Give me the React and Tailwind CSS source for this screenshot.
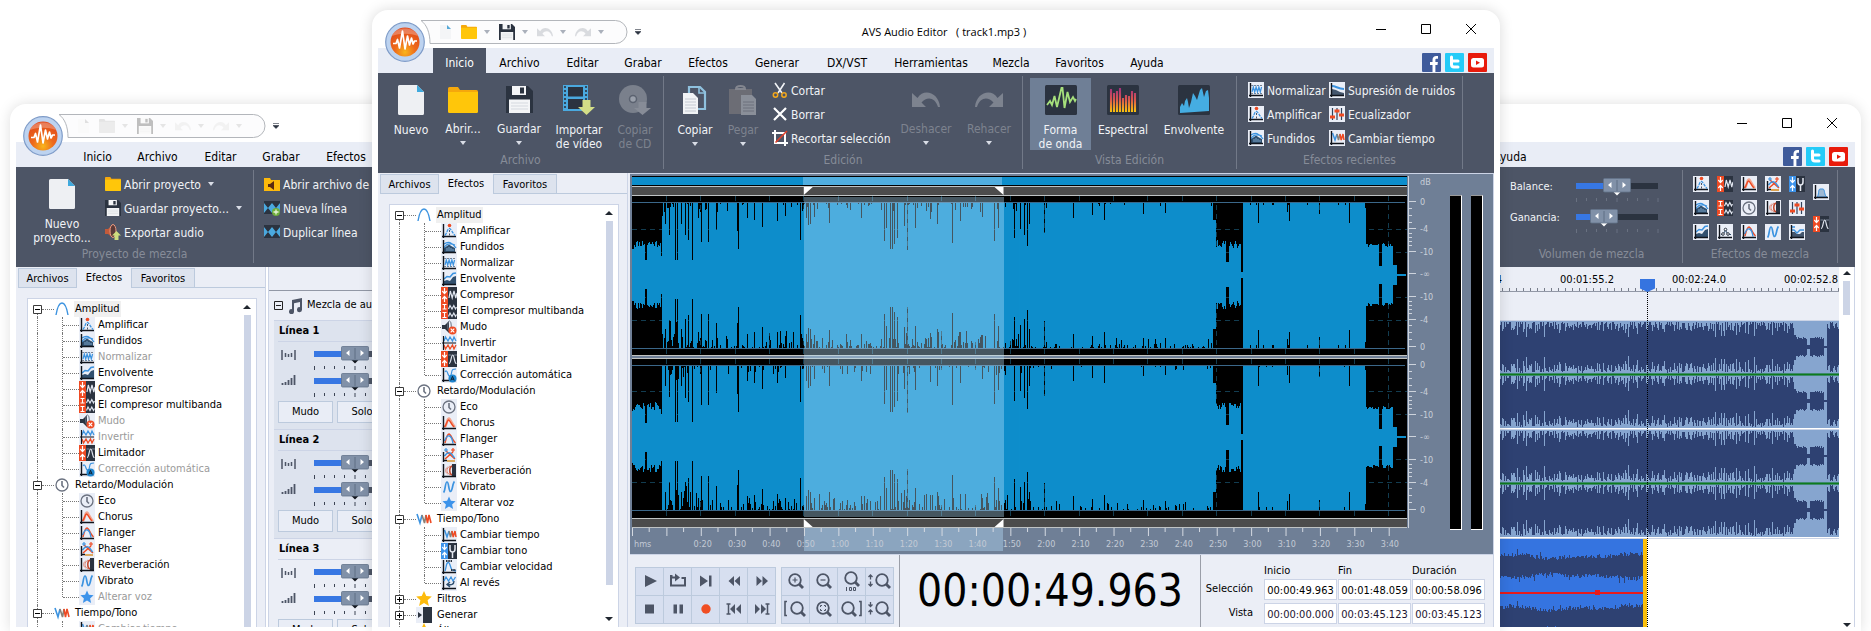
import React from 'react'

/* ---------- helpers ---------- */

function noise(seed) {
  let s = seed
  return () => {
    s = (s * 1664525 + 1013904223) % 4294967296
    return s / 4294967296
  }
}

const SPIKES = {
  33: 0.3, 37: 0.45, 43: 0.79, 45: 0.79, 49: 0.3, 53: 0.46, 56: 0.52, 60: 0.79, 69: 0.55, 76: 0.55, 84: 0.39, 105: 0.4,
  106: 0.65, 115: 0.22, 122: 0.25, 130: 0.34, 145: 0.26, 153: 0.19, 168: 0.52, 174: 0.22, 176: 0.32, 178: 0.3, 182: 0.2,
  197: 0.29, 229: 0.22, 252: 0.54, 254: 0.35, 258: 0.65, 260: 0.65, 262: 0.58, 265: 0.5, 272: 0.33, 275: 0.66, 283: 0.35,
  298: 0.24, 305: 0.3, 320: 0.56, 328: 0.26, 350: 0.2, 362: 0.54, 366: 0.35, 382: 0.5, 389: 0.37, 393: 0.46, 396: 0.61,
  398: 0.3, 413: 0.43, 442: 0.22, 461: 0.18, 473: 0.25, 512: 0.16, 534: 0.15, 627: 0.29, 656: 0.14, 658: 0.26, 688: 0.17, 718: 0.29,
}

function laneAmp(x, r, deep = 1) {
  if (x < 30) {
    if (x > 12 && x < 15) return 0.2
    return 0.38 + r() * 0.1 - (x < 2 ? 0.05 : 0) - (x > 28 ? 0.12 : 0)
  }
  if (x < 582) {
    const e = x < 75 ? 0.5 : x < 172 ? 0.3 : x < 400 ? 0.32 : 0.2
    const v = r()
    const w = r()
    if (v < e) return 1 - w * w * deep * (x < 75 ? 0.22 : x < 400 ? 0.14 : 0.08)
    return 1
  }
  if (x < 585) return 0.75
  if (x < 610) return x > 594 && x < 598 ? 0.17 : 0.36 + r() * 0.12
  if (x < 612) return 0.04
  if (x < 734) return r() < 0.08 ? 0.96 : 1
  if (x < 735) return 0.92
  if (x < 748) return 0.38 + r() * 0.05
  if (x < 751) return 0.12
  if (x < 762) return 0.38 + r() * 0.05
  if (x < 766) return 0.14
  return 0.012
}

function lanePath(cy, hh, seed) {
  const r = noise(seed)
  let d = ''
  for (let x = 0; x < 775; x++) {
    let up = laneAmp(x, r)
    let dn = x > 30 && x < 582 ? Math.min(up, laneAmp(x, r, 1.7)) : up
    const s = SPIKES[x]
    if (s) {
      up = 1 - s
      dn = 1 - s * 0.85
    }
    d += `M${x + 0.5} ${(cy - up * hh).toFixed(1)}V${(cy + dn * hh).toFixed(1)}`
  }
  return d
}

const LANE_A = lanePath(274, 73, 11)
const LANE_B = lanePath(437, 73, 47)

const CLIP_W = 1351
function clipPath(cy, hh, seed) {
  const r = noise(seed)
  let d = ''
  for (let x = 0; x < CLIP_W; x++) {
    const u = CLIP_W - x
    let a
    if (u < 47 && u > 12) {
      a = u > 45 ? 0.75 : u > 43 ? 0.5 : u < 16 ? 0.05 : u > 29 && u < 33 ? 0.08 : 0.3 + r() * 0.1
    } else {
      const k = r()
      a = 1 - k * k * (x % 3 ? 0.35 : 0.62)
      if (r() < 0.02) a -= 0.25
    }
    d += `M${x + 0.5} ${(cy - a * hh).toFixed(1)}V${(cy + (a + (r() - 0.5) * 0.06) * hh).toFixed(1)}`
  }
  return d
}
const CLIP_TOP = clipPath(26, 25, 5)
const CLIP_BOTTOM = clipPath(80, 25, 5)

function voicePath(cy, base, seed) {
  const r = noise(seed)
  let d = ''
  for (let x = 0; x < 1155; x++) {
    const a = base + Math.sin(x / 9) + Math.sin(x / 22) * 1.5
    const up = a + r() * 4 + (r() < 0.06 ? 4 : 0)
    const dn = a + r() * 4 + (r() < 0.06 ? 4 : 0)
    d += `M${x + 0.5} ${(cy - up).toFixed(1)}V${(cy + dn).toFixed(1)}`
  }
  return d
}
const VOICE_TOP = voicePath(27, 8, 3)
const VOICE_BOTTOM = voicePath(80, 9, 9)

/* ---------- effect icons ---------- */

const Axes = () => <path d="M2.5 1v14M1 13.5h14" stroke="#10141c" strokeWidth="1.4" fill="none" />
const Squeeze = ({ fill = '#ee4a23' }) => (
  <g>
    <rect width="7" height="16" fill={fill} />
    <path d="M3.500 1v5.500M1.300 4l2.200 2.600L5.700 4M3.500 15V9.500M1.300 12l2.200-2.600L5.700 12" stroke="#fff" strokeWidth="1.200" fill="none" />
  </g>
)

const FX = {
  curve: <path d="M2 14C3.500 5 5.500 2 8 2s4.500 3 6 12" stroke="#3c93e0" strokeWidth="1.400" fill="none" />,
  amp: (
    <g>
      <Axes />
      <path d="M4 12.500C6 10 6.500 6 8 5.500S11 9 14 12.500" stroke="#3c93e0" strokeWidth="1.300" strokeDasharray="3 1" fill="none" />
      <path d="M8.500 7v6" stroke="#4d5566" strokeDasharray="2 1.500" />
      <circle cx="8.500" cy="2.500" r="1.800" fill="#ee4a23" />
    </g>
  ),
  fade: (
    <g>
      <path d="M3 13V9l3-2 2-1.500 3 2L14 9v4z" fill="#31506f" />
      <path d="M3 5c4-3 8-2 12 4M3 9c2-4 6-5 11-3" stroke="#3c93e0" strokeWidth="1.300" fill="none" />
      <path d="M6 12V9M8 12V8M10 12V9M12 12v-2" stroke="#9cc7ef" strokeWidth=".7" />
      <Axes />
    </g>
  ),
  norm: (
    <g>
      <Axes />
      <path d="M3 3.500h12M3 11.500h12" stroke="#7a8290" strokeDasharray="2 1" />
      <path d="M4 10l1.300-5 1.400 5 1.400-5 1.400 5 1.400-5 1.400 5 1.300-5" stroke="#3c93e0" strokeWidth="1.200" fill="none" />
    </g>
  ),
  env: (
    <g>
      <path d="M3 13v-3l3-1 3 1 3-4 3-1v8z" fill="#31506f" />
      <path d="M3 8l3-2.500 3 .5 3-3.500 3-.5" stroke="#3c93e0" strokeWidth="1.600" fill="none" />
      <Axes />
    </g>
  ),
  comp: (
    <g>
      <rect width="16" height="16" fill="#2b3340" />
      <Squeeze />
      <path d="M8 11l1.300-7 1.900 7 1.800-7 1.800 7 1.200-5" stroke="#dfe4ee" strokeWidth="1.200" fill="none" />
    </g>
  ),
  multi: (
    <g>
      <rect width="16" height="16" fill="#2b3340" />
      <rect width="7" height="16" fill="#ee4a23" />
      <path d="M1.500 1.500h4M1.500 6h4M1.500 9.500h4M1.500 14.500h4M3.500 1.500v4.500M3.500 9.500v5" stroke="#fff" strokeWidth="1.100" />
      <path d="M7.500 6l1.500-3.500L11 6l1.800-3.500L14.500 6l1-2M7.500 13.500L9 10l2 3.500 1.800-3.500 1.700 3.500 1-2" stroke="#dfe4ee" strokeWidth="1.200" fill="none" />
    </g>
  ),
  mute: (
    <g>
      <path d="M1 6h3l4-4v12l-4-4H1z" fill="#2b3340" />
      <ellipse cx="8.500" cy="7" rx="1.800" ry="5" fill="none" stroke="#6b7484" />
      <circle cx="11.500" cy="11.500" r="4" fill="#ee4a23" />
      <path d="M9.700 9.700l3.600 3.600M13.300 9.700l-3.600 3.600" stroke="#fff" strokeWidth="1.200" />
    </g>
  ),
  inv: (
    <g>
      <path d="M3 6l1.500-4L7 6l2-4 2.500 4L13 2l2 4" stroke="#3c93e0" strokeWidth="1.300" fill="none" />
      <path d="M3 10l1.500 4L7 10l2 4 2.500-4L13 14l2-4" stroke="#ee4a23" strokeWidth="1.300" fill="none" />
      <path d="M2.500 1v14M1 8h14" stroke="#10141c" strokeWidth="1.200" />
    </g>
  ),
  lim: (
    <g>
      <rect width="16" height="16" fill="#2b3340" />
      <Squeeze />
      <path d="M8 12.500c2.200 0 2-8.500 3.700-8.500s1.500 8.500 3.800 8.500" stroke="#dfe4ee" strokeWidth="1.200" fill="none" />
      <path d="M7.500 4h3M13 4h3" stroke="#7b8494" />
    </g>
  ),
  auto: (
    <g>
      <Axes />
      <path d="M4 5c1-2 2-1 3 2s3 3 3.500-1S12 2 15 2" stroke="#3c93e0" strokeWidth="1.200" fill="none" />
      <circle cx="11.500" cy="11.500" r="4" fill="#1f86cf" />
      <path d="M9.800 13.500l1.700-4.200 1.700 4.200M10.300 12.200h2.400" stroke="#12202e" fill="none" />
    </g>
  ),
  echo: (
    <g>
      <circle cx="8" cy="8" r="6" fill="none" stroke="#6b7280" strokeWidth="1.300" />
      <path d="M8 4v4.500l2 2" stroke="#6b7280" strokeWidth="1.600" fill="none" />
    </g>
  ),
  chorus: (
    <g>
      <path d="M4 12C6 9 6.500 3 8 3.500s2.500 5 6 8.500" stroke="#f3a48f" strokeWidth="2.400" fill="none" />
      <path d="M3.500 12C6 9 6 5 7.500 5S10 9 13 12" stroke="#ee4a23" strokeWidth="1.400" fill="none" />
      <Axes />
    </g>
  ),
  flanger: (
    <g>
      <path d="M4 12C5 8 6 3 8 3s3 6 6.500 9" stroke="#ee4a23" strokeWidth="1.400" fill="none" />
      <path d="M3.500 10C5 6 7 4.500 8.500 5s3 4 3.500 7.500" stroke="#3c93e0" strokeWidth="1.400" fill="none" />
      <Axes />
    </g>
  ),
  phaser: (
    <g>
      <path d="M4 12l8-7M5 4l9 8" stroke="#ee4a23" strokeWidth="1.500" />
      <path d="M3.500 9c4-6 7-3 10 2" stroke="#3c93e0" strokeWidth="1.500" fill="none" />
      <path d="M5 1v4M3 3h4" stroke="#3c93e0" strokeWidth="1.200" />
      <path d="M12 1v4M10 3h4" stroke="#ee4a23" strokeWidth="1.200" />
      <path d="M2.500 5v10M3 13.500h3" stroke="#10141c" strokeWidth="1.400" />
      <path d="M6 14h8" stroke="#dba14e" strokeWidth="1.800" />
    </g>
  ),
  reverb: (
    <g>
      <rect x="11" y="1" width="4" height="12" fill="#2b3340" />
      <path d="M11 3c-3 1-3 8 0 9" stroke="#c4472b" strokeWidth="1.500" fill="none" />
      <path d="M9 3C5 5 5 10 9 12M6.500 4C4 6 4 9 6.500 11" stroke="#dd8877" strokeWidth="1" fill="none" />
      <Axes />
    </g>
  ),
  vibrato: <path d="M2.500 13.500C4.500 12 4 3 6 3s1.500 9.500 3.500 9.500S11.500 4 13.500 2.500" stroke="#3c93e0" strokeWidth="1.700" fill="none" />,
  star: <path d="M8 1.500l1.900 4.300 4.700.5-3.500 3.100 1 4.600L8 11.600 3.900 14l1-4.600L1.400 6.300l4.700-.5z" fill="#3d93ea" />,
  gold: <path d="M8 0l2.300 5 5.500.5-4.200 3.700 1.300 5.800L8 12 3.100 15l1.300-5.800L.2 5.500 5.700 5z" fill="#fdbb0d" />,
  wave: (
    <g fill="none" strokeWidth="1.600">
      <path d="M1 3l3 9 2-8" stroke="#3c93e0" />
      <path d="M6 4l2.500 8L10 4" stroke="#8a8076" />
      <path d="M10 4l1.500 8L13 4l2 8" stroke="#ee4a23" />
    </g>
  ),
  tempo: (
    <g fill="none">
      <path d="M3.500 3L6 10l2-6" stroke="#3c93e0" strokeWidth="1.500" />
      <path d="M8 4l1.500 6L11 4" stroke="#8a8076" strokeWidth="1.500" />
      <path d="M11 4l1.200 6L14 4l1 6" stroke="#ee4a23" strokeWidth="1.500" />
      <Axes />
    </g>
  ),
  pitch: (
    <g>
      <rect width="16" height="16" fill="#2b3340" />
      <Squeeze fill="#3d93ea" />
      <path d="M9 2v4c0 4 5 4 5 0V2M11.500 9v6" stroke="#e6eaf2" strokeWidth="1.500" fill="none" />
    </g>
  ),
  speed: (
    <g>
      <Axes />
      <path d="M4 12c1.500-4 1-8 3-8.500S9 8 11 11l4 1" stroke="#3c93e0" strokeWidth="1.300" fill="none" />
      <path d="M5 2h6M10 11h5" stroke="#2b3340" strokeWidth="1.800" strokeDasharray="1.500 .8" />
    </g>
  ),
  reverse: (
    <g>
      <Axes />
      <path d="M3 6l2-4 2.500 4L10 2l2 4 2.500-4" stroke="#3c93e0" strokeWidth="1.300" fill="none" />
      <path d="M13 6c0 4-3 4-6 3.500M9 7L6 9.500 9 12" stroke="#31506f" strokeWidth="1.400" fill="none" />
    </g>
  ),
  gen: (
    <g>
      <rect width="16" height="16" fill="#eaeef7" />
      <rect x="7" width="9" height="16" fill="#2b3340" />
      <path d="M2 5l4 3-4 3z" fill="#2b3340" />
    </g>
  ),
  denoise: (
    <g>
      <path d="M3 13V7l4 1 4 2 4 1v2z" fill="#44566d" />
      <path d="M3 4c4 0 6 3 12 3" stroke="#3c93e0" strokeWidth="2" fill="none" />
      <Axes />
    </g>
  ),
  eq: (
    <g>
      <path d="M3.500 2v12M8 2v12M12.500 2v12" stroke="#31425c" strokeWidth="1.200" />
      <path d="M1 11h5M5.500 5H10.500M10 9h5" stroke="#ee4a23" strokeWidth="3" />
    </g>
  ),
  band: (
    <g>
      <path d="M4 13c2-1 1-8 3-8h3c2 0 1 7 4 8z" fill="#9db8d4" stroke="#3c93e0" />
      <Axes />
    </g>
  ),
  nodes: (
    <g>
      <Axes />
      <path d="M4 10.500h2M7 9l1.500-3L10 9M11 10.500h3" stroke="#31506f" fill="none" />
      <circle cx="6" cy="10" r="1.300" fill="#fff" stroke="#2b3340" />
      <circle cx="8.500" cy="5.500" r="1.300" fill="#fff" stroke="#2b3340" />
      <circle cx="11" cy="10" r="1.300" fill="#fff" stroke="#2b3340" />
    </g>
  ),
  notch: (
    <g>
      <path d="M3 13V8h3l2 2h3l2-2h2v5z" fill="#44566d" />
      <path d="M3 6h2l3 3 3-3h4M3 3h3" stroke="#3c93e0" strokeWidth="1.300" fill="none" />
      <Axes />
    </g>
  ),
}

function FxIcon({ name, bare }) {
  return (
    <svg viewBox="0 0 16 16" className="h-4 w-4 shrink-0" aria-hidden="true">
      {!bare && <rect width="16" height="16" fill="#eaeef7" />}
      {FX[name]}
    </svg>
  )
}

/* ---------- general icons ---------- */

const Caret = ({ className = 'text-[#d9dde6]' }) => (
  <svg viewBox="0 0 6 4" className={`h-1 w-1.5 shrink-0 ${className}`} aria-hidden="true">
    <path d="M0 0h6L3 4z" fill="currentColor" />
  </svg>
)

const DocIcon = ({ className }) => (
  <svg viewBox="0 0 26 30" className={className} aria-hidden="true">
    <path d="M1.500 0H19l7 7v21.500a1.500 1.500 0 0 1-1.500 1.500h-23A1.500 1.500 0 0 1 0 28.500v-27A1.500 1.500 0 0 1 1.500 0z" fill="#eef0f3" />
    <path d="M19 0l7 7h-7z" fill="#3fa9dd" />
  </svg>
)
const FolderIcon = ({ className }) => (
  <svg viewBox="0 0 30 26" className={className} aria-hidden="true">
    <path d="M0 1.500A1.500 1.500 0 0 1 1.500 0H10l2 3h16.500A1.500 1.500 0 0 1 30 4.500V8H0z" fill="#f5a80c" />
    <path d="M0 5h30v19.500a1.500 1.500 0 0 1-1.500 1.500h-27A1.500 1.500 0 0 1 0 24.500z" fill="#ffc60a" />
  </svg>
)
const FloppyIcon = ({ className }) => (
  <svg viewBox="0 0 27 27" className={className} aria-hidden="true">
    <path d="M0 0h22l5 5v22H0z" fill="#2b3340" />
    <path d="M6 0h14v9H6z" fill="#f4f5f7" />
    <path d="M14 1.500h4v6h-4z" fill="#2b3340" />
    <path d="M3 13.500h21V27H3z" fill="#f4f5f7" />
    <path d="M5 17h17M5 20h17M5 23h17" stroke="#d5d9df" />
  </svg>
)
const UndoIcon = ({ className, flip }) => (
  <svg viewBox="0 0 28 17" className={className} aria-hidden="true">
    <g transform={flip ? 'translate(28 0) scale(-1 1)' : undefined}>
      <path d="M0 2v14h14L9.500 11.500C15 5 23 6 26 16h2C27 2 12-3.500 5.500 7z" fill="currentColor" />
    </g>
  </svg>
)

const FacebookIcon = () => (
  <svg viewBox="0 0 19 19" className="h-[19px] w-[19px]" aria-hidden="true">
    <rect width="19" height="19" rx="1" fill="#3f5b9b" />
    <path d="M10.500 19v-7H8V9h2.500V7c0-2.600 1.500-4 3.800-4H16v2.700h-1.300c-1 0-1.300.5-1.300 1.400V9h2.500l-.4 3h-2.100v7z" fill="#fff" />
  </svg>
)
const TwitterIcon = () => (
  <svg viewBox="0 0 19 19" className="h-[19px] w-[19px]" aria-hidden="true">
    <rect width="19" height="19" rx="1" fill="#24cbf8" />
    <path d="M6.500 4v7.500a2.500 2.500 0 0 0 2.500 2.500h4M6.500 8H13" stroke="#fff" strokeWidth="3" strokeLinecap="round" fill="none" />
  </svg>
)
const YoutubeIcon = () => (
  <svg viewBox="0 0 19 19" className="h-[19px] w-[19px]" aria-hidden="true">
    <rect width="19" height="19" rx="1" fill="#e81b0c" />
    <rect x="3" y="5" width="13" height="9.500" rx="2.500" fill="#fff" />
    <path d="M8 7.500l4 2.200-4 2.200z" fill="#e81b0c" />
  </svg>
)

const Orb = () => (
  <svg viewBox="0 0 40 40" className="absolute left-[13px] top-3 z-10 h-10 w-10" aria-hidden="true">
    <defs>
      <radialGradient id="orb" cx="50%" cy="85%" r="80%">
        <stop offset="0" stopColor="#f9b61c" />
        <stop offset=".45" stopColor="#ee6a1c" />
        <stop offset="1" stopColor="#e04a1a" />
      </radialGradient>
    </defs>
    <circle cx="20" cy="20" r="19.300" fill="#bdd3f0" stroke="#7f9cc8" strokeWidth="1.200" />
    <circle cx="20" cy="20" r="14.500" fill="url(#orb)" />
    <path d="M7 14C10 4 30 4 33 14c-8-3-18-3-26 0z" fill="#fff" opacity=".28" />
    <path d="M8 21.500h3l1.500-4 2 8.500 3-17 2.500 18 2.500-13 2 9 2-7 1.500 6 1.500-3h2.500" stroke="#fff" strokeWidth="1.700" strokeLinejoin="round" fill="none" />
  </svg>
)

/* ---------- window chrome ---------- */

function QuickBar({ dim }) {
  return (
    <div className="relative ml-[42px] mt-2.5 flex h-6 items-center pl-4">
      <svg viewBox="0 0 208 24" className="absolute left-0 top-0 h-6 w-[208px]" aria-hidden="true">
        <path d="M1 .5H195.500a11.500 11.500 0 0 1 0 23H10C10 13 7 5 1 .5z" fill="#fcfcfd" stroke="#b3b6bb" />
      </svg>
      <div className={`relative flex items-center gap-x-[9px] ${dim ? 'opacity-30 grayscale' : ''}`}>
        <button aria-label="Nuevo" className="flex h-4 w-4 justify-end">
          <svg viewBox="0 0 16 16" className="h-4 w-4" aria-hidden="true">
            <path d="M4 1h7l4 4v10H4z" fill="#f4f5f7" />
            <path d="M11 1l4 4h-4z" fill="#56a9d8" />
          </svg>
        </button>
        <button aria-label="Abrir" className="flex items-center gap-[7px]">
          <FolderIcon className="h-3.5 w-4" />
          <Caret className="text-[#aab0bb]" />
        </button>
        <button aria-label="Guardar" className="flex items-center gap-[7px]">
          <FloppyIcon className="h-4 w-4" />
          <Caret className="text-[#aab0bb]" />
        </button>
        <button aria-label="Deshacer" className="flex items-center gap-[7px] text-[#d9dbdf]">
          <UndoIcon className="h-2.5 w-4" />
          <Caret className="text-[#aab0bb]" />
        </button>
        <button aria-label="Rehacer" className="flex items-center gap-[7px] text-[#d9dbdf]">
          <UndoIcon flip className="h-2.5 w-4" />
          <Caret className="text-[#aab0bb]" />
        </button>
      </div>
      <button aria-label="Personalizar" className="ml-[31px]">
        <svg viewBox="0 0 6 6" className="h-1.5 w-1.5" aria-hidden="true">
          <path d="M0 .5h6M0 2.500h6L3 5.500z" fill="#2b3340" stroke="#2b3340" strokeWidth=".6" />
        </svg>
      </button>
    </div>
  )
}

const WindowControls = () => (
  <div className="flex items-center justify-end gap-[35px] pr-[18px]">
    <button aria-label="Minimizar">
      <svg viewBox="0 0 10 10" className="h-2.5 w-2.5" stroke="#000" fill="none"><path d="M0 5.500h10" /></svg>
    </button>
    <button aria-label="Maximizar">
      <svg viewBox="0 0 10 10" className="h-2.5 w-2.5" stroke="#000" fill="none"><path d="M.5.5h9v9h-9z" /></svg>
    </button>
    <button aria-label="Cerrar">
      <svg viewBox="0 0 10 10" className="h-2.5 w-2.5" stroke="#000" fill="none"><path d="M0 0l10 10M10 0L0 10" /></svg>
    </button>
  </div>
)

function MenuTab({ label, active, className }) {
  return (
    <a href="#" className={`flex shrink-0 items-center justify-center pt-1 ${active ? 'bg-[#4d5566] text-white' : 'text-black'} ${className}`}>
      {label}
    </a>
  )
}

const MENU_START = [['Inicio', 'w-[53px]'], ['Archivo', 'w-[67px]'], ['Editar', 'w-[59px]'], ['Grabar', 'w-[62px]'], ['Efectos', 'w-[68px]']]
const MAIN_MENU = [
  ...MENU_START,
  ['Generar', 'w-[70px]'], ['DX/VST', 'w-[70px]'], ['Herramientas', 'w-[98px]'], ['Mezcla', 'w-[62px]'], ['Favoritos', 'w-[75px]'], ['Ayuda', 'w-[60px]'],
]
const MIX_MENU = [...MENU_START, ['Ayuda', 'ml-auto mr-[243px] w-[60px]']]

function AppWindow({ title, menu, active, dim, children, ribbon }) {
  return (
    <>
      <Orb />
      <header className="grid h-[38px] shrink-0 grid-cols-[1fr_auto_1fr]">
        <QuickBar dim={dim} />
        <h1 className="flex items-center whitespace-pre pl-4 pt-1.5 font-['Open_Sans',sans-serif] text-[11px] font-medium text-black">{title}</h1>
        <WindowControls />
      </header>
      <nav className="flex h-[25px] shrink-0 justify-between overflow-hidden bg-[#e9edf6] pl-[55px] text-[12px]">
        <div className="flex grow">
          {menu.map(([label, width]) => (
            <MenuTab key={label} label={label} active={active === label} className={width} />
          ))}
        </div>
        <div className="flex shrink-0 items-center gap-1 pr-[7px] pt-1">
          <a href="#" aria-label="Facebook"><FacebookIcon /></a>
          <a href="#" aria-label="Twitter"><TwitterIcon /></a>
          <a href="#" aria-label="YouTube"><YoutubeIcon /></a>
        </div>
      </nav>
      <div className="flex h-[100px] shrink-0 bg-[#4d5566] text-[12px] leading-[14px] text-[#f1f3f6]">{ribbon}</div>
      {children}
    </>
  )
}

/* ---------- ribbon pieces ---------- */

function Group({ title, className = '', children }) {
  return (
    <section className="flex h-full shrink-0 flex-col pb-1 pt-[3px]">
      <div className={`flex grow flex-col border-r border-[#727988] ${className}`}>
        <div className="flex h-[76px] items-start">{children}</div>
        <h2 className="pt-px text-center text-[#868c98]">{title}</h2>
      </div>
    </section>
  )
}

function BigButton({ icon, label, caret, disabled, pressed, className }) {
  return (
    <button className={`mt-0.5 flex h-[72px] shrink-0 flex-col items-center pt-[7px] ${pressed ? 'bg-[#6f7f96]' : ''} ${disabled ? 'text-[#7d838f]' : ''} ${className}`}>
      <span className="flex h-[30px] items-center">{icon}</span>
      <span className="mt-2 whitespace-pre-line">{label}</span>
      {caret && <span className="flex h-3.5 items-center"><Caret /></span>}
    </button>
  )
}

function SmallButton({ icon, label, caret }) {
  return (
    <button className="flex h-4 items-center gap-[3px] whitespace-nowrap">
      {icon}
      <span className="pt-0.5">{label}</span>
      {caret && <span className="pl-1"><Caret /></span>}
    </button>
  )
}

const FilmIcon = () => (
  <svg viewBox="0 0 32 30" className="h-[30px] w-8" aria-hidden="true">
    <rect width="25" height="26" fill="#4aa9df" />
    <path d="M5 2h15v9.500H5zM5 14h15v10H5z" fill="#2b3340" />
    <path d="M2 1v24M23 1v24" stroke="#2b3340" strokeWidth="1.600" strokeDasharray="2 2" />
    <path d="M19.500 15h8v7H32l-8.500 8L15 22h4.500z" fill="#d3de87" />
  </svg>
)
const DiscIcon = () => (
  <svg viewBox="0 0 32 30" className="h-[30px] w-8" aria-hidden="true">
    <circle cx="14" cy="14" r="14" fill="#7a808c" />
    <circle cx="14" cy="14" r="3.500" fill="#9aa0ab" stroke="#5b6270" strokeWidth="1.500" />
    <path d="M19.500 17h8v6H32l-8.500 7L15 23h4.500z" fill="#878c97" />
  </svg>
)
const CopyIcon = () => (
  <svg viewBox="0 0 24 30" className="h-[30px] w-6" aria-hidden="true">
    <path d="M6 10V2h11l5 5v17h-7" fill="none" stroke="#8fc1de" strokeWidth="2.200" />
    <path d="M16 2v6h6" fill="none" stroke="#8fc1de" strokeWidth="1.600" />
    <path d="M0 8h10l5 5v16H0z" fill="#f1f3f5" />
    <path d="M2 14h11M2 17h11M2 20h11M2 23h11M2 26h11" stroke="#c5cad2" />
  </svg>
)
const PasteIcon = () => (
  <svg viewBox="0 0 28 30" className="h-[30px] w-7" aria-hidden="true">
    <path d="M0 4h23v25H0z" fill="#6c6d75" />
    <path d="M7 4c0-4 9-4 9 0z" fill="none" stroke="#83868f" strokeWidth="2" />
    <path d="M12 10h11l4 4v16H12z" fill="#8a8f99" />
    <path d="M14 17h11M14 20h11M14 23h11M14 26h11" stroke="#6c717d" />
  </svg>
)
const CutIcon = () => (
  <svg viewBox="0 0 16 16" className="h-4 w-4" fill="none" aria-hidden="true">
    <path d="M3 1l7 10M12.500 1L6 11" stroke="#f1f3f6" strokeWidth="1.600" />
    <circle cx="3.500" cy="13" r="2.200" stroke="#f3a81c" strokeWidth="1.500" />
    <circle cx="12" cy="13" r="2.200" stroke="#f3a81c" strokeWidth="1.500" />
  </svg>
)
const DeleteIcon = () => (
  <svg viewBox="0 0 16 16" className="h-4 w-4" aria-hidden="true">
    <path d="M2 2l12 12M14 2L2 14" stroke="#fff" strokeWidth="2.200" />
  </svg>
)
const CropIcon = () => (
  <svg viewBox="0 0 16 16" className="h-4 w-4" fill="none" aria-hidden="true">
    <path d="M3 0v13h13M0 3h13v13" stroke="#fff" strokeWidth="2" />
    <path d="M3.500 12.500L15 1" stroke="#e0412b" strokeWidth="1.600" />
  </svg>
)
const WaveTile = () => (
  <svg viewBox="0 0 32 30" className="h-[30px] w-8" aria-hidden="true">
    <rect width="32" height="30" rx="1.500" fill="#2b3340" />
    <path d="M2 20l3-4 2 4 2.500-9 2.500 11 4.500-19 1 0 2 20 3-16 2.500 10 3-5 2 4 1-2" stroke="#a6e07c" strokeWidth="1.800" fill="none" />
  </svg>
)
const SpectralTile = () => (
  <svg viewBox="0 0 32 30" className="h-[30px] w-8" aria-hidden="true">
    <defs>
      <linearGradient id="spec" x1="0" y1="3" x2="0" y2="27" gradientUnits="userSpaceOnUse">
        <stop offset="0" stopColor="#a2307d" /><stop offset=".5" stopColor="#dd5a4c" /><stop offset="1" stopColor="#fcc40b" />
      </linearGradient>
    </defs>
    <rect width="32" height="30" rx="1.500" fill="#2b3340" />
    <path d="M4 27V4M7 27V8M10 27V6M13 27V3M16 27V13M19 27V10M22 27V11M25 27V6M28 27V8" stroke="url(#spec)" strokeWidth="2.100" />
  </svg>
)
const EnvelopeTile = () => (
  <svg viewBox="0 0 32 30" className="h-[30px] w-8" aria-hidden="true">
    <rect width="32" height="30" rx="1.500" fill="#2b3340" />
    <path d="M2 28V22l2-4 2 3 1-5 2-3 1 4 1 6 2-6 2-9 2 3 2 4 3-10 2-2 2 9 2-6 2-1 1 8v13z" fill="#45ade2" />
  </svg>
)

function MainRibbon() {
  return (
    <>
      <Group title="Archivo" className="w-[286px]">
        <BigButton className="ml-2 w-[50px]" label="Nuevo" icon={<DocIcon className="h-[30px] w-[26px]" />} />
        <BigButton className="w-[54px]" label="Abrir..." caret icon={<FolderIcon className="h-[26px] w-[30px]" />} />
        <BigButton className="w-[58px]" label="Guardar" caret icon={<FloppyIcon className="h-[27px] w-[27px]" />} />
        <BigButton className="w-[62px]" label={'Importar\nde vídeo'} icon={<FilmIcon />} />
        <BigButton className="w-[50px]" label={'Copiar\nde CD'} disabled icon={<DiscIcon />} />
      </Group>
      <Group title="Edición" className="w-[359px]">
        <BigButton className="ml-[7px] w-12" label="Copiar" caret icon={<CopyIcon />} />
        <BigButton className="w-12" label="Pegar" caret disabled icon={<PasteIcon />} />
        <div className="ml-[5px] flex w-[122px] flex-col gap-2 pt-1.5">
          <SmallButton label="Cortar" icon={<CutIcon />} />
          <SmallButton label="Borrar" icon={<DeleteIcon />} />
          <SmallButton label="Recortar selección" icon={<CropIcon />} />
        </div>
        <BigButton className="w-16" label="Deshacer" caret disabled icon={<UndoIcon className="h-[17px] w-7" />} />
        <BigButton className="w-[62px]" label="Rehacer" caret disabled icon={<UndoIcon flip className="h-[17px] w-7" />} />
      </Group>
      <Group title="Vista Edición" className="w-[214px]">
        <BigButton className="ml-[7px] w-[61px]" label={'Forma\nde onda'} pressed icon={<WaveTile />} />
        <BigButton className="w-16" label="Espectral" icon={<SpectralTile />} />
        <BigButton className="w-[78px]" label="Envolvente" icon={<EnvelopeTile />} />
      </Group>
      <Group title="Efectos recientes" className="w-[226px]">
        <div className="ml-[11px] flex w-[81px] flex-col gap-2 pt-1.5">
          <SmallButton label="Normalizar" icon={<FxIcon name="norm" />} />
          <SmallButton label="Amplificar" icon={<FxIcon name="amp" />} />
          <SmallButton label="Fundidos" icon={<FxIcon name="fade" />} />
        </div>
        <div className="flex flex-col gap-2 pt-1.5">
          <SmallButton label="Supresión de ruidos" icon={<FxIcon name="denoise" />} />
          <SmallButton label="Ecualizador" icon={<FxIcon name="eq" />} />
          <SmallButton label="Cambiar tiempo" icon={<FxIcon name="tempo" />} />
        </div>
      </Group>
    </>
  )
}

function Slider({ label, pos = 41, track = '#4d5566', tick = '#3d4554', pointer = '#10141c' }) {
  return (
    <label className="relative block h-[27px] w-[83px] shrink-0">
      <span className="sr-only">{label}</span>
      <svg viewBox="0 0 83 27" className="h-[27px] w-[83px]" aria-hidden="true">
        <rect y="5" width="82" height="6" fill={track} />
        <rect y="5" width={pos} height="6" fill="#3777e3" />
        <path d={`M${pos - 3.500} 14h7l-3.500 3.500z`} fill={pointer} />
        <rect x={pos - 13.500} y=".5" width="27" height="13.500" rx="1" fill="#8191a8" stroke="#63738a" strokeWidth=".8" />
        <path d={`M${pos} 2v11`} stroke="#5f6e84" />
        <path d={`M${pos - 9} 7l3.500-3v6zM${pos + 9} 7l-3.500-3v6z`} fill="#fff" />
        <path d="M.5 20v4M10.500 20v3M20.500 20v3M30.500 20v3M41 20v4M51.500 20v3M61.500 20v3M72 20v3M82 20v4" stroke={tick} />
      </svg>
      <input type="range" min="0" max="82" defaultValue={pos} className="absolute inset-0 h-4 w-full opacity-0" />
    </label>
  )
}

const TrackIcon = ({ kind }) => (
  <svg viewBox="0 0 16 16" className="h-4 w-4" aria-hidden="true">
    <rect y="1" width="16" height="13" fill="#2b3340" />
    <path d="M0 3l4 5-4 5zM8 3L4 8l4 5 4-5zM16 3l-4 5 4 5z" fill="#4aa9df" />
    {kind === 'add' && (
      <g>
        <circle cx="12" cy="12" r="4" fill="#6fae3c" />
        <path d="M12 9.500v5M9.500 12h5" stroke="#e7f5d6" strokeWidth="1.300" />
      </g>
    )}
  </svg>
)
const ExportIcon = () => (
  <svg viewBox="0 0 16 16" className="h-4 w-4" aria-hidden="true">
    <path d="M0 5h3l5-5v14L3 10H0z" fill="#c25a3a" />
    <ellipse cx="8" cy="7" rx="3" ry="6.500" fill="#5a3a38" stroke="#e89a80" />
    <path d="M11.500 7l4.500 4.500h-2.500V16h-4v-4.500H7z" fill="#cddc7e" />
  </svg>
)
const FolderAudioIcon = () => (
  <svg viewBox="0 0 16 14" className="h-3.5 w-4" aria-hidden="true">
    <path d="M0 1h6l1 2h9v11H0z" fill="#fdb90b" />
    <path d="M4 7h2l4-3v9l-4-3H4z" fill="#5b2a12" />
  </svg>
)

function MixRibbon() {
  return (
    <>
      <Group title="Proyecto de mezcla" className="w-[238px]">
        <BigButton className="ml-[11px] w-[70px]" label={'Nuevo\nproyecto...'} icon={<DocIcon className="h-[30px] w-[26px]" />} />
        <div className="ml-2 flex flex-col gap-2 pt-1.5">
          <SmallButton label="Abrir proyecto" caret icon={<FolderIcon className="h-3.5 w-4" />} />
          <SmallButton label="Guardar proyecto..." caret icon={<FloppyIcon className="h-4 w-4" />} />
          <SmallButton label="Exportar audio" icon={<ExportIcon />} />
        </div>
      </Group>
      <div className="ml-[10px] flex flex-col gap-2 pt-[9px]">
        <SmallButton label="Abrir archivo de" icon={<FolderAudioIcon />} />
        <SmallButton label="Nueva línea" icon={<TrackIcon kind="add" />} />
        <SmallButton label="Duplicar línea" icon={<TrackIcon />} />
      </div>
      <div className="grow" />
      <Group title="Volumen de mezcla" className="w-[182px]">
        <div className="grid grid-cols-[66px_83px] gap-y-1 pl-[9px] pt-2 text-[11px]">
          <span className="pt-0.5">Balance:</span>
          <Slider label="Balance" track="#2b3340" tick="#697181" pointer="#fff" />
          <span className="pt-0.5">Ganancia:</span>
          <Slider label="Ganancia" pos={28} track="#2b3340" tick="#697181" pointer="#fff" />
        </div>
      </Group>
      <Group title="Efectos de mezcla" className="mr-[17px] w-[155px]">
        <div className="flex items-center gap-2 pl-[10px] pt-1.5">
          <div className="grid grid-cols-5 gap-2">
            {['amp', 'comp', 'chorus', 'phaser', 'pitch', 'fade', 'multi', 'echo', 'reverb', 'eq', 'env', 'nodes', 'flanger', 'vibrato', 'notch'].map((n) => (
              <button key={n} aria-label={n}><FxIcon name={n} /></button>
            ))}
          </div>
          <div className="flex flex-col gap-4">
            <button aria-label="band"><FxIcon name="band" /></button>
            <button aria-label="lim"><FxIcon name="lim" /></button>
          </div>
        </div>
      </Group>
    </>
  )
}

/* ---------- effects tree ---------- */

const TREE = [
  { label: 'Amplitud', icon: 'curve', open: true, selected: true, items: [['Amplificar', 'amp'], ['Fundidos', 'fade'], ['Normalizar', 'norm'], ['Envolvente', 'env'], ['Compresor', 'comp'], ['El compresor multibanda', 'multi'], ['Mudo', 'mute'], ['Invertir', 'inv'], ['Limitador', 'lim'], ['Corrección automática', 'auto']] },
  { label: 'Retardo/Modulación', icon: 'echo', open: true, items: [['Eco', 'echo'], ['Chorus', 'chorus'], ['Flanger', 'flanger'], ['Phaser', 'phaser'], ['Reverberación', 'reverb'], ['Vibrato', 'vibrato'], ['Alterar voz', 'star']] },
  { label: 'Tiempo/Tono', icon: 'wave', open: true, items: [['Cambiar tiempo', 'tempo'], ['Cambiar tono', 'pitch'], ['Cambiar velocidad', 'speed'], ['Al revés', 'reverse']] },
  { label: 'Filtros', icon: 'gold', items: [] },
  { label: 'Generar', icon: 'gen', items: [] },
  { label: 'Álbum', icon: 'gold', items: [] },
]
const MIX_TREE = [TREE[0], TREE[1], { ...TREE[2], items: TREE[2].items.slice(0, 1) }]

const VLine = ({ className }) => <span className={`w-px border-l border-dotted border-[#777] ${className}`} />
const HLine = ({ className }) => <span className={`h-px shrink-0 border-t border-dotted border-[#777] ${className}`} />

function Tree({ nodes, disabled = [], end }) {
  return (
    <div className="flex min-h-0 grow overflow-hidden border border-b-0 border-[#ccd4e6] bg-white">
      <ul className="w-[215px] shrink-0 pl-[5px] pt-0.5 text-[11px] leading-4 text-black">
        {nodes.map((node, i) => (
          <li key={node.label}>
            <div className="flex h-4 items-center">
              <span className="flex h-4 w-[9px] flex-col items-center">
                <VLine className={i ? 'grow' : 'grow opacity-0'} />
                <button aria-label={node.label} className="h-[9px] w-[9px]">
                  <svg viewBox="0 0 9 9" className="h-[9px] w-[9px]" fill="#fff" stroke="#3b3b3b" aria-hidden="true">
                    <path d="M.5.5h8v8h-8z" />
                    <path d={node.open ? 'M2 4.500h5' : 'M2 4.500h5M4.500 2v5'} stroke="#000" />
                  </svg>
                </button>
                <VLine className="grow" />
              </span>
              <HLine className="w-3" />
              <FxIcon name={node.icon} bare />
              <span className={`ml-1 px-px ${node.selected ? 'bg-[#f0f0f0]' : ''}`}>{node.label}</span>
            </div>
            {node.items.length > 0 && (
              <ul>
                {node.items.map(([label, icon], k) => (
                  <li key={label} className="flex h-4 items-center">
                    <span className="flex h-4 w-[9px] justify-center"><VLine className="h-4" /></span>
                    <span className="ml-5 flex h-4 w-px"><VLine className={k === node.items.length - 1 ? 'h-2' : 'h-4'} /></span>
                    <HLine className="w-4" />
                    <FxIcon name={icon} />
                    <span className={`ml-[3px] whitespace-nowrap ${disabled.includes(label) ? 'text-[#9a9a9a]' : ''}`}>{label}</span>
                  </li>
                ))}
              </ul>
            )}
          </li>
        ))}
      </ul>
      <div className="flex w-2 flex-col items-center pt-1.5">
        <svg viewBox="0 0 8 4" className="h-1 w-2 shrink-0" aria-hidden="true"><path d="M0 4h8L4 0z" fill="#20262f" /></svg>
        <span className="mt-1.5 w-[7px] grow bg-[#ccd4e6]" />
        {end && (
          <svg viewBox="0 0 8 4" className="mb-1.5 mt-8 h-1 w-2 shrink-0" aria-hidden="true"><path d="M0 0h8L4 4z" fill="#20262f" /></svg>
        )}
      </div>
    </div>
  )
}

function SidePanel({ nodes, disabled, end }) {
  return (
    <aside className="flex w-[250px] shrink-0 flex-col border-r border-[#ccd4e6] bg-[#ebeef6] pl-0.5 pt-px text-[11px]">
      <div className="flex h-5 shrink-0 text-black">
        <button className="flex w-[59px] items-center justify-center border border-[#bccadd] bg-[#dde3ee] pt-0.5">Archivos</button>
        <button className="flex w-[54px] items-center justify-center">Efectos</button>
        <button className="flex w-16 items-center justify-center border border-[#bccadd] bg-[#dde3ee] pt-0.5">Favoritos</button>
        <span className="grow border-b border-[#bccadd]" />
      </div>
      <div className="flex min-h-0 grow pb-0 pl-[9px] pr-2 pt-2.5">
        <Tree nodes={nodes} disabled={disabled} end={end} />
      </div>
    </aside>
  )
}

/* ---------- waveform editor ---------- */

const Marks = ({ up }) => (
  <div className="border-y border-[#bfc3c4] bg-[#4c4c4c]">
    <svg viewBox="0 0 776 8" preserveAspectRatio="none" className="block h-2 w-full" aria-hidden="true">
      {up ? <path d="M172 0v8h9zM372 0v8h-9z" fill="#fff" /> : <path d="M172 8V0h9zM372 8V0h-9z" fill="#fff" />}
    </svg>
  </div>
)

const TIMES = ['0:20', '0:30', '0:40', '0:50', '1:00', '1:10', '1:20', '1:30', '1:40', '1:50', '2:00', '2:10', '2:20', '2:30', '2:40', '2:50', '3:00', '3:10', '3:20', '3:30', '3:40']
const STEP = 34.44

function WaveChart() {
  const cols = Array.from({ length: 22 }, (_, i) => (i + 1) * STEP)
  return (
    <svg viewBox="0 195 776 323" preserveAspectRatio="none" shapeRendering="crispEdges" className="block h-[323px] w-full" aria-hidden="true">
      <rect y="195" width="776" height="323" fill="#000" />
      <g stroke="#123c50" strokeDasharray="5 4">
        {[229, 252, 297, 320, 392, 415, 460, 483].map((y) => <path key={y} d={`M0 ${y - 0.5}H776`} />)}
        {cols.map((x) => <path key={x} d={`M${x} 195V354M${x} 358V518`} />)}
      </g>
      <path d={LANE_A} stroke="#0d8ecc" fill="none" />
      <path d={LANE_B} stroke="#0d8ecc" fill="none" />
      <g stroke="#3b678a">
        <path d="M0 201.500H774M0 347.500H774M0 364.500H774M0 510.500H774" />
      </g>
      <rect y="354" width="776" height="4" fill="#6f7f96" />
      <path d="M0 354.500H776M0 357.500H776" stroke="#c2c4c0" />
      <rect x="172" y="196" width="200" height="321" fill="#b5e2fc" opacity=".38" />
    </svg>
  )
}

function TimeRuler() {
  let major = ''
  let minor = ''
  for (let i = 0; i < 23; i++) {
    major += `M${i * STEP + 0.5} 0v8`
    if (i < 22) minor += `M${(i + 0.5) * STEP} 0v4`
  }
  return (
    <div className="relative h-[26px] text-[9px] text-[#c3cad5]">
      <span className="absolute left-[22.160%] top-0 h-[23px] w-[25.770%] bg-[#8ba5bf]" />
      <svg viewBox="0 0 776 8" preserveAspectRatio="none" shapeRendering="crispEdges" className="relative block h-2 w-full" stroke="#d5dae2" aria-hidden="true">
        <path d={major} />
        <path d={minor} />
      </svg>
      <div className="relative flex pl-0.5 leading-4">
        <span className="grow-[1.5] basis-0">hms</span>
        {TIMES.map((t) => <span key={t} className="grow basis-0 text-center">{t}</span>)}
      </div>
    </div>
  )
}

function DbScale() {
  const lane = [['0', 'mt-1.5'], ['-4', 'mt-[11px]'], ['-10', 'mt-[7px]'], ['-∞', 'mt-1.5'], ['-10', 'mt-[7px]'], ['-4', 'mt-[7px]'], ['0', 'mt-[11px]']]
  const lane2 = [['0', 'mt-0.5'], ...lane.slice(1)]
  const majors = [202, 229, 252, 274, 297, 320, 347, 365, 392, 415, 437, 460, 483, 510]
  const minors = [209, 216, 223, 234, 238, 242, 246, 302, 306, 310, 314, 326, 333, 340, 372, 379, 386, 397, 401, 405, 409, 465, 469, 473, 477, 489, 496, 503]
  return (
    <div className="flex w-[86px] shrink-0">
      <svg viewBox="0 176 13 353" className="h-[353px] w-[13px] shrink-0" stroke="#cdd3dc" shapeRendering="crispEdges" aria-hidden="true">
        <path d={'M1.500 176V528' + majors.map((y) => `M1 ${y - 0.5}h8`).join('') + minors.map((y) => `M1 ${y - 0.5}h4`).join('')} />
      </svg>
      <div className="flex w-[30px] flex-col text-[9px] leading-4 text-[#c9cfd9]">
        <span className="h-3 leading-3">dB</span>
        {lane.concat(lane2).map(([t, m], i) => <span key={i} className={`h-4 ${m}`}>{t}</span>)}
      </div>
      <div className="mt-[19px] flex h-[335px] gap-[9px]">
        <span className="w-3 border-b border-r border-t border-b-white border-r-white border-t-[#9a9a9a] bg-black" />
        <span className="w-3 border-b border-r border-t border-b-white border-r-white border-t-[#9a9a9a] bg-black" />
      </div>
    </div>
  )
}

const T = '#4d5566'
const TRANSPORT = [
  ['Reproducir', <path d="M5 4l12 6-12 6z" fill={T} />],
  ['Bucle', <g><path d="M4.500 5H3v9.500h14V7H13.500M3 6.500h6" fill="none" stroke={T} strokeWidth="2" /><path d="M7 2.500l5 4-5 4z" fill={T} /></g>],
  ['Siguiente', <path d="M4 4.500l8 5.500-8 5.500zM13 4.500h2.500v11H13z" fill={T} />],
  ['Retroceder', <path d="M10 5v10l-5.500-5zM16 5v10l-5.500-5z" fill={T} />],
  ['Avanzar', <path d="M4.500 5v10L10 10zM10.500 5v10l5.500-5z" fill={T} />],
  ['Detener', <path d="M5 5.500h9v9H5z" fill={T} />],
  ['Pausa', <path d="M5.500 5.500H9v9H5.500zM11.500 5.500H15v9h-3.500z" fill={T} />],
  ['Grabar', <circle cx="10" cy="10" r="4.700" fill="#f04e23" />],
  ['Inicio', <g><path d="M11 5v10l-5-5zM17 5v10l-5-5z" fill={T} /><path d="M2.500 5h4M2.500 15h4M4.500 5v10" stroke={T} strokeWidth="1.500" /></g>],
  ['Final', <g><path d="M3 5v10l5-5zM9 5v10l5-5z" fill={T} /><path d="M13.500 5h4M13.500 15h4M15.500 5v10" stroke={T} strokeWidth="1.500" /></g>],
]
const Lens = ({ x = 0 }) => (
  <g transform={`translate(${x} 0)`} fill="none" stroke={T}>
    <circle cx="9" cy="9" r="5.800" strokeWidth="1.800" />
    <path d="M13 13l4 4" strokeWidth="2.800" />
  </g>
)
const ZOOM = [
  ['Acercar', <g><Lens /><path d="M9 6.500v5M6.500 9h5" stroke={T} strokeWidth="1.200" /></g>],
  ['Alejar', <g><Lens /><path d="M6.500 9h5" stroke={T} strokeWidth="1.200" /></g>],
  ['Zoom 100', <g><g transform="translate(0 -2)"><Lens /></g><path d="M4.500 16v4M7.500 16.500h2v3h-2zM11.500 16.500h2v3h-2z" stroke={T} fill="none" /></g>],
  ['Acercar vertical', <g><Lens x={3} /><path d="M.5 4.500v4M-1.500 6L.5 4l2 2M.5 10.500v4M-1.500 13l2 2 2-2" stroke={T} strokeWidth="1.300" fill="none" /></g>],
  ['Zoom al inicio', <g><Lens x={2} /><path d="M1 2.500h-2v14h2" stroke={T} strokeWidth="1.600" fill="none" /></g>],
  ['Zoom a la selección', <g><Lens /><path d="M6.500 8V6.500H8M10 6.500h1.500V8M11.500 10v1.500H10M8 11.500H6.500V10" stroke={T} fill="none" /></g>],
  ['Zoom al final', <g><Lens x={-3} /><path d="M17 2.500h2v14h-2" stroke={T} strokeWidth="1.600" fill="none" /></g>],
  ['Alejar vertical', <g><Lens x={3} /><path d="M.5 3v4M-1.500 5.500l2 2 2-2M.5 15.500v-4M-1.500 13l2-2 2 2" stroke={T} strokeWidth="1.300" fill="none" /></g>],
]

function KeyPad({ items, className }) {
  return (
    <div className={`grid shrink-0 border-l border-t border-[#bccadd] ${className}`}>
      {items.map(([label, icon]) => (
        <button key={label} aria-label={label} className="flex h-7 items-center justify-center border-b border-r border-[#bccadd] bg-[#d7dff0] pb-px">
          <svg viewBox="0 0 20 20" className="h-5 w-5 overflow-visible" aria-hidden="true">{icon}</svg>
        </button>
      ))}
    </div>
  )
}

function Field({ label, value, strong }) {
  return (
    <input
      aria-label={label}
      defaultValue={value}
      className={`h-[21px] w-full min-w-0 border border-[#ccd4e6] bg-white pt-px text-center text-[11px] ${strong ? 'text-black' : 'text-[#1c1430]'}`}
    />
  )
}

function Editor() {
  return (
    <main className="flex min-w-0 grow flex-col border-r border-[#ccd4e6]">
      <div className="flex h-[381px] shrink-0 border-t border-[#ccd4e6] bg-[#6f7f96] pl-0.5 pt-0.5">
        <div className="flex min-w-0 grow flex-col">
          <div className="flex h-2.5 shrink-0 border-y border-black bg-[#0d8ecc]">
            <span className="ml-[22%] w-[25.800%] bg-[#50aee0]" />
          </div>
          <Marks />
          <WaveChart />
          <Marks up />
          <TimeRuler />
        </div>
        <DbScale />
      </div>
      <div className="flex min-h-0 grow border-t border-[#ccd4e6] bg-[#ebeef6]">
        <div className="flex shrink-0 items-start gap-[5px] border-r border-[#9a9ea8] px-[5px] pt-3">
          <KeyPad items={TRANSPORT} className="w-[141px] grid-cols-5" />
          <KeyPad items={ZOOM} className="w-[113px] grid-cols-4" />
        </div>
        <output className="flex grow items-center justify-center text-[44px] leading-none text-black">00:00:49.963</output>
        <div className="grid w-[293px] shrink-0 grid-cols-[62px_73px_73px_73px] content-start gap-x-px gap-y-[3px] border-l border-[#9a9ea8] pt-2 text-[11px] leading-4 text-black">
          <span />
          <span className="-mb-[3px]">Inicio</span>
          <span className="-mb-[3px]">Fin</span>
          <span className="-mb-[3px]">Duración</span>
          <span className="pr-[10px] pt-0.5 text-right">Selección</span>
          <Field strong label="Selección inicio" value="00:00:49.963" />
          <Field strong label="Selección fin" value="00:01:48.059" />
          <Field strong label="Selección duración" value="00:00:58.096" />
          <span className="pr-[10px] pt-0.5 text-right">Vista</span>
          <Field label="Vista inicio" value="00:00:00.000" />
          <Field label="Vista fin" value="00:03:45.123" />
          <Field label="Vista duración" value="00:03:45.123" />
        </div>
      </div>
    </main>
  )
}

/* ---------- mixer ---------- */

function MixLine({ name, tone }) {
  return (
    <section className={`h-[109px] shrink-0 border-t border-[#ccd4e6] pl-1 text-[11px] text-black ${tone}`}>
      <h3 className="h-[21px] border-b border-[#ccd4e6] pl-px leading-5"><b>{name}</b></h3>
      <div className="flex gap-x-[18px] pl-[3px] pt-1">
        <div className="flex flex-col gap-[15px] pt-1">
          <svg viewBox="0 0 15 10" className="h-2.5 w-[15px]" aria-hidden="true"><path d="M1 0v10M14 0v10M4.500 3v4M7.500 4v3M10.500 3v4" stroke="#4d5566" strokeWidth="1.500" /></svg>
          <svg viewBox="0 0 15 10" className="h-2.5 w-[15px]" aria-hidden="true"><path d="M1.500 10V8M4.500 10V7M7.500 10V5M10.500 10V3M13.500 10V0" stroke="#4d5566" strokeWidth="1.800" /></svg>
        </div>
        <div className="flex flex-col">
          <Slider label={`${name} balance`} />
          <Slider label={`${name} volumen`} />
        </div>
      </div>
      <div className="flex gap-1 pt-px">
        <button className="h-[22px] w-[55px] border border-[#bccadd] bg-[#e9edf6]">Mudo</button>
        <button className="h-[22px] w-[50px] border border-[#bccadd] bg-[#e9edf6]">Solo</button>
      </div>
    </section>
  )
}

function MixPanel() {
  return (
    <div className="ml-0.5 flex w-[220px] shrink-0 flex-col border-l border-[#ccd4e6] bg-[#ebeef6]">
      <div className="h-6 shrink-0 border-b border-[#9298a6]" />
      <div className="flex h-[29px] shrink-0 items-center gap-1 pl-[5px] text-[11px] text-black">
        <button aria-label="Contraer">
          <svg viewBox="0 0 9 9" className="h-[9px] w-[9px]" fill="none" stroke="#222"><path d="M.5.5h8v8h-8zM2 4.500h5" /></svg>
        </button>
        <svg viewBox="0 0 16 16" className="h-4 w-4" aria-hidden="true"><path d="M5 2l10-2v11.500a2.500 2.500 0 1 1-2-2.300V4L7 5.300v8.200a2.500 2.500 0 1 1-2-2.300z" fill="#4d5566" /></svg>
        <span className="whitespace-nowrap">Mezcla de audio</span>
      </div>
      <div className="min-h-0 grow overflow-hidden pl-[5px]">
        <MixLine name="Línea 1" tone="bg-[#dde3ee]" />
        <MixLine name="Línea 2" tone="bg-[#dde3ee]" />
        <MixLine name="Línea 3" tone="bg-[#ebeef6]" />
      </div>
    </div>
  )
}

function Clip() {
  return (
    <div className="h-[109px] shrink-0 border-b border-[#ccd4e6] pb-px">
      <svg viewBox={`0 0 ${CLIP_W} 107`} preserveAspectRatio="none" shapeRendering="crispEdges" className="block h-[107px] w-full" aria-hidden="true">
        <rect width={CLIP_W} height="107" fill="#86a5cf" />
        <path d={CLIP_TOP} stroke="#2e4172" />
        <path d={CLIP_BOTTOM} stroke="#2e4172" />
        <path d={`M0 53.500H${CLIP_W}`} stroke="#3c8a6c" strokeWidth="3" />
        <path d={`M0 53.500H${CLIP_W}`} stroke="#0e7a1c" />
      </svg>
    </div>
  )
}

function Tracks() {
  return (
    <div className="relative flex min-w-0 grow flex-col bg-white">
      <div className="flex h-[25px] shrink-0 flex-col justify-between overflow-hidden border-b border-[#9298a6] bg-[#ebeef6]">
        <div className="-mr-7 flex justify-end pt-[5px] text-[11px] leading-4 text-black">
          {['00:01:26.4', '00:01:55.2', '00:02:24.0', '00:02:52.8'].map((t) => (
            <span key={t} className="w-28 shrink-0 text-center">{t}</span>
          ))}
        </div>
        <span className="h-[3px] w-full shrink-0 bg-[repeating-linear-gradient(to_left,#777d8a_0_1px,transparent_1px_7px)]" />
      </div>
      <div className="h-[29px] shrink-0 border-b border-[#ccd4e6] bg-[#ebeef6]" />
      <Clip />
      <Clip />
      <div className="flex min-h-0 grow justify-start overflow-hidden pr-[192px]">
        <svg viewBox="0 0 1155 107" preserveAspectRatio="none" shapeRendering="crispEdges" className="block h-[107px] min-w-0 grow" aria-hidden="true">
          <rect width="1155" height="107" fill="#3574e0" />
          <path d={VOICE_TOP} stroke="#2e4172" />
          <path d={VOICE_BOTTOM} stroke="#2e4172" />
          <path d="M0 53.500H1155" stroke="#e81b1b" strokeWidth="2" />
          <rect x="1107" y="51" width="5" height="5" fill="#e81b1b" />
        </svg>
        <span className="w-1 shrink-0 bg-[#fdc00b]" />
      </div>
      <div className="absolute bottom-0 right-[184px] top-3 flex w-[15px] flex-col items-center">
        <svg viewBox="0 0 15 13" className="h-[13px] w-[15px] shrink-0" aria-hidden="true"><path d="M0 0h15v9.500L7.500 13 0 9.500z" fill="#3574e0" /></svg>
        <span className="grow border-l border-dotted border-black" />
      </div>
    </div>
  )
}

function MixScroll() {
  return (
    <div className="flex w-4 shrink-0 flex-col items-center border-r border-[#ccd4e6] bg-white pt-1">
      <svg viewBox="0 0 8 4" className="h-1 w-2" aria-hidden="true"><path d="M0 4h8L4 0z" fill="#20262f" /></svg>
      <span className="mt-1.5 h-[34px] w-[7px] bg-[#ccd4e6]" />
      <svg viewBox="0 0 8 4" className="mt-auto h-1 w-2" aria-hidden="true"><path d="M0 0h8L4 4z" fill="#20262f" /></svg>
    </div>
  )
}

/* ---------- page ---------- */

const FRAME = 'absolute flex flex-col overflow-hidden rounded-t-[16px] bg-white px-1.5 pb-1'

export default function App() {
  return (
    <div className="relative h-screen w-full overflow-hidden bg-white font-['DejaVu_Sans_Condensed','DejaVu_Sans',sans-serif]">
      <div className={`${FRAME} bottom-0 left-[10px] right-[10px] top-[104px] shadow-[0_0_14px_rgba(0,0,0,0.13)]`}>
        <AppWindow title="" menu={MIX_MENU} dim ribbon={<MixRibbon />}>
          <div className="flex min-h-0 grow">
            <SidePanel nodes={MIX_TREE} disabled={['Normalizar', 'Mudo', 'Invertir', 'Corrección automática', 'Alterar voz', 'Cambiar tiempo']} />
            <MixPanel />
            <Tracks />
            <MixScroll />
          </div>
        </AppWindow>
      </div>
      <div className={`${FRAME} bottom-0 left-[372px] right-[371px] top-[10px] shadow-[0_0_14px_rgba(0,0,0,0.15)]`}>
        <AppWindow active="Inicio" menu={MAIN_MENU} title="AVS Audio Editor   ( track1.mp3 )" ribbon={<MainRibbon />}>
          <div className="flex min-h-0 grow bg-[#ebeef6]">
            <SidePanel nodes={TREE} end />
            <span className="w-0.5 shrink-0" />
            <Editor />
          </div>
        </AppWindow>
      </div>
    </div>
  )
}
